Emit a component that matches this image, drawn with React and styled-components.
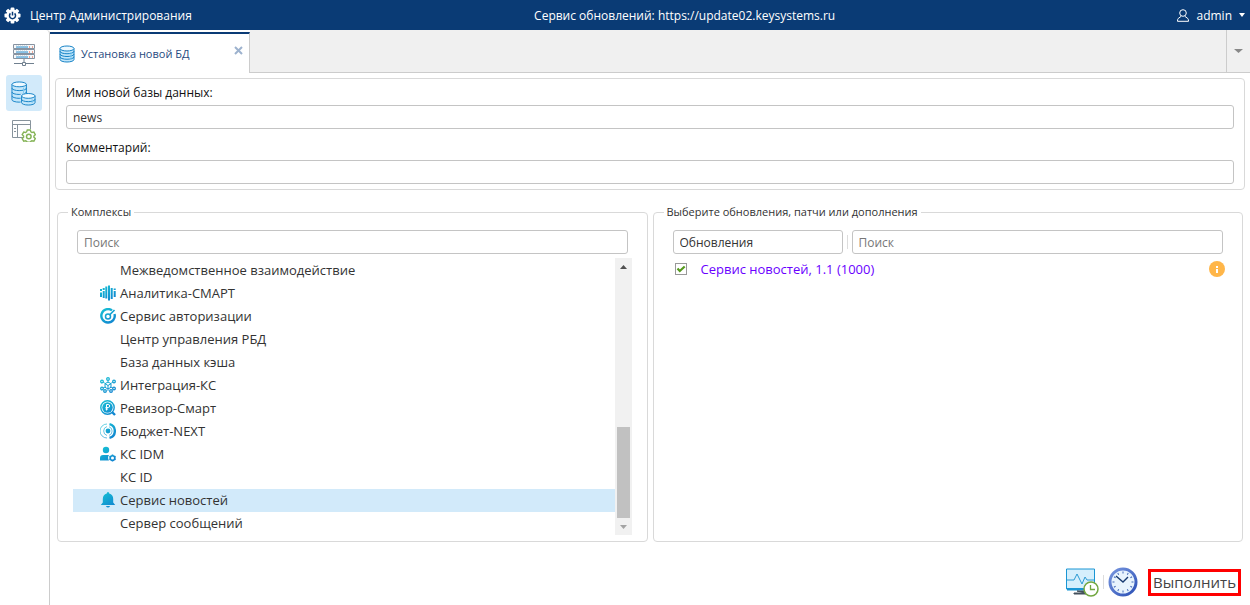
import styled, { createGlobalStyle, css } from 'styled-components'
import { useState } from 'react'

const GlobalStyle = createGlobalStyle`
    * { box-sizing: border-box; }
    body {
        margin: 0;
        background: #fff;
        color: #333;
        font-family: 'Open Sans', 'Noto Sans', sans-serif;
        font-size: 13px;
    }
    button, input, select { font: inherit; color: inherit; }
    svg { display: block; flex: none; }
`

const Page = styled.div`
    display: flex;
    flex-direction: column;
    min-height: 100vh;
`
const Header = styled.header`
    display: flex;
    justify-content: space-between;
    align-items: center;
    height: 30px;
    padding: 0 5px 0 4px;
    background: #0a3b75;
    color: #fff;
    font-size: 12px;
    font-weight: 500;
`
const Brand = styled.div`
    display: flex;
    align-items: center;
    gap: 9px;
`
const UserButton = styled.button`
    display: flex;
    align-items: center;
    gap: 7px;
    padding: 0;
    border: 0;
    background: none;
`
const Body = styled.div`
    display: flex;
    flex: 1;
`
const Sidebar = styled.nav`
    display: flex;
    flex-direction: column;
    align-items: center;
    gap: 2px;
    width: 50px;
    padding: 7px 2px 0 0;
    border-right: 1px solid #ccc;
    border-top-right-radius: 4px;
`
const SideButton = styled.button`
    display: grid;
    place-items: center;
    width: 36px;
    height: 36px;
    padding: 0;
    border: 0;
    border-radius: 3px;
    background: ${({ $active }) => ($active ? '#d2eafa' : 'none')};
`
const Main = styled.main`
    display: flex;
    flex-direction: column;
    flex: 1;
    min-width: 0;
`
const TabBar = styled.div`
    display: flex;
    height: 43px;
`
const Tab = styled.div`
    display: flex;
    align-items: center;
    width: 200px;
    margin-top: 2px;
    padding: 0 6px 0 9px;
    border-top: 2px solid #0a3b75;
    border-right: 1px solid #ccc;
    color: #1f4a80;
    font-size: 11px;
`
const TabTitle = styled.span`
    flex: 1;
    margin-left: 6px;
`
const TabClose = styled.button`
    align-self: flex-start;
    margin-top: 12px;
    padding: 0;
    border: 0;
    background: none;
`
const TabSpace = styled.div`
    flex: 1;
    border-bottom: 1px solid #ccc;
    background: #f0f0f0;
`
const TabMenu = styled.button`
    display: grid;
    place-items: center;
    width: 24px;
    padding: 0;
    border: solid #ccc;
    border-width: 0 0 1px 1px;
    background: #f0f0f0;
`
const Form = styled.div`
    display: flex;
    flex-direction: column;
    gap: 9px;
    margin: 5px 5px 0;
    padding: 4px 10px 5px;
    border: 1px solid #d9d9d9;
    border-radius: 4px;
`
const Field = styled.label`
    display: flex;
    flex-direction: column;
    gap: 2px;
    color: #111;
    font-size: 12px;
    line-height: 20px;
`
const control = css`
    width: 100%;
    height: 24px;
    padding: 0 6px;
    border: 1px solid #c4c4c4;
    border-radius: 3px;
    outline: none;
    background: #fff;
    color: #333;
    font-size: 12px;
`
const Input = styled.input`
    ${control}
    &::placeholder { color: #777; opacity: 1; }
`
const Select = styled.select`
    ${control}
    flex: none;
    width: 170px;
    appearance: none;
`
const Columns = styled.div`
    display: grid;
    grid-template-columns: 1fr 1fr;
    gap: 5px;
    padding: 14px 7px 0;
`
const Group = styled.fieldset`
    min-width: 0;
    margin: 0;
    padding: 10px 15px 6px;
    border: 1px solid #d9d9d9;
    border-radius: 4px;
`
const Legend = styled.legend`
    margin-left: -5px;
    padding: 0 3px;
    font-size: 11px;
    line-height: 16px;
`
const SearchRow = styled.div`
    display: flex;
    align-items: center;
    gap: 4px;
    padding: 0 4px;
`
const Divider = styled.span`
    flex: none;
    width: 1px;
    height: 14px;
    background: #ddd;
`
const ListBox = styled.div`
    display: flex;
    margin-top: 4px;
`
const List = styled.ul`
    flex: 1;
    margin: 0;
    padding: 1px 0 0;
    list-style: none;
`
const Item = styled.li`
    display: flex;
    align-items: center;
    height: 23px;
    padding: 0 0 2px 27px;
    gap: 4px;
    font-size: 13px;
    background: ${({ $selected }) => ($selected ? '#d2eafa' : 'none')};
`
const IconSlot = styled.span`
    width: 16px;
    height: 16px;
`
const Scrollbar = styled.div`
    display: flex;
    flex-direction: column;
    align-items: center;
    justify-content: flex-end;
    width: 17px;
    background: #f1f1f1;
`
const ScrollArrow = styled.span`
    display: grid;
    place-items: center;
    height: 17px;
    margin-bottom: ${({ $up }) => ($up ? 'auto' : '0')};
`
const Thumb = styled.div`
    width: 13px;
    height: 91px;
    background: #c1c1c1;
`
const Update = styled.div`
    display: flex;
    align-items: center;
    height: 23px;
    margin-top: 3px;
    padding: 0 2px 0 6px;
    color: #6a00ff;
    font-size: 13px;
`
const UpdateLabel = styled.label`
    display: flex;
    align-items: center;
    flex: 1;
    gap: 14px;
`
const Check = styled.input`
    width: 12px;
    height: 12px;
    margin: 0;
    appearance: none;
    border: 1px solid #999;
    background: #fff;
    &:checked {
        background: #fff url("data:image/svg+xml,%3Csvg xmlns='http://www.w3.org/2000/svg' viewBox='0 0 10 10'%3E%3Cpath d='M1.5 4.5l2.3 2.5L8.700 2.500' fill='none' stroke='%23569a1e' stroke-width='2.200'/%3E%3C/svg%3E");
    }
`
const Footer = styled.footer`
    display: flex;
    align-items: center;
    justify-content: flex-end;
    gap: 3px;
    margin-top: auto;
    padding: 0 9px 8px 0;
`
const IconButton = styled.button`
    display: grid;
    place-items: center;
    padding: 0 1px;
    border: 0;
    background: none;
`
const RunButton = styled.button`
    height: 27px;
    margin-left: 6px;
    padding: 0 2px;
    border: 3px solid #f00;
    background: #fff;
    color: #444;
    font-size: 15px;
    line-height: 20px;
`

const Gear = () => (
    <svg width="17" height="17" viewBox="-9 -9 18 18">
        {[0, 45, 90, 135].map(a => <rect key={a} x="-2" y="-8.500" width="4" height="17" rx="1" fill="#fff" transform={`rotate(${a})`} />)}
        <circle r="6.500" fill="#fff" />
        <path d="M-2.200-2.200a3.200 3.200 0 1 0 4.400 0M0-4V0" fill="none" stroke="#0a3b75" strokeWidth="1.600" />
    </svg>
)
const Person = () => (
    <svg width="12" height="13" viewBox="0 0 12 13" fill="none" stroke="#fff">
        <circle cx="6" cy="4" r="3.300" />
        <path d="M4.300 7.200L1.200 9.500Q.5 10 .5 12.300h11Q11.500 10 10.800 9.500L7.700 7.200" />
    </svg>
)
const Triangle = ({ color, up, size = 7 }) => (
    <svg width={size} height="4" viewBox="0 0 8 4" preserveAspectRatio="none">
        <path d={up ? 'M0 4h8L4 0z' : 'M0 0h8L4 4z'} fill={color} />
    </svg>
)
const Cross = () => (
    <svg width="9" height="9" viewBox="0 0 9 9">
        <path d="M1 1l7 7M8 1L1 8" stroke="#9db2ce" strokeWidth="2" />
    </svg>
)
const Cylinder = ({ x = 0, y = 0, w = 15, h = 17, rings = 3 }) => {
    const r = w / 2
    const step = (h - 5) / rings
    const curve = i => `M${x} ${y + 2.5 + step * i}a${r} 2.500 0 0 0 ${w} 0`
    return (
        <g fill="none" stroke="#1683c7">
            <path d={`M${x} ${y + 2.5}v${h - 5}a${r} 2.500 0 0 0 ${w} 0v-${h - 5}`} fill="#c2e6fa" />
            <ellipse cx={x + r} cy={y + 2.5} rx={r} ry="2.500" fill="#eef9ff" />
            {Array.from({ length: rings - 1 }, (_, i) => <path key={i} d={curve(i + 1)} />)}
            <path d={`M${x + w - 3} ${y + 6}v${h - 8}`} stroke="#7fcaf0" />
        </g>
    )
}
const TabDatabase = () => <svg width="16" height="18" viewBox="0 0 16 18"><Cylinder x={1} y={1} w={14} h={16} rings={4} /></svg>
const Databases = () => (
    <svg width="25" height="25" viewBox="0 0 26 26">
        <Cylinder x={1} y={1} w={15} h={21} rings={4} />
        <path d="M10 13h15v12H10z" fill="#d2eafa" />
        <Cylinder x={11} y={13} w={14} h={12} rings={2} />
    </svg>
)
const Servers = () => (
    <svg width="22" height="22" viewBox="0 0 22 22" fill="none">
        {[0, 5, 10].map(y => (
            <g key={y}>
                <path d={`M.5 ${y + .5}h21v4h-21z`} fill="#f5f8fa" stroke="#8793a1" />
                <path d={`M3 ${y + 3}h12`} stroke="#1688d0" />
                <path d={`M3 ${y + 2}h12`} stroke="#b8c5cf" strokeDasharray="1 1" />
                <path d={`M16 ${y + 3}h1M19 ${y + 3}h1`} stroke="#e8502f" />
            </g>
        ))}
        <path d="M11 15v3M1 19.500h8M13 19.500h8M9.500 18.500h3v3h-3z" stroke="#70808f" />
    </svg>
)
const Settings = () => (
    <svg width="24" height="22" viewBox="0 0 24 22" fill="none">
        <path d="M12 17.500H.5V.5h18V9M.5 4.500h18M5.500 4.500v13" stroke="#87939c" />
        <path d="M2 8.500h2M2 11.500h2" stroke="#87939c" />
        <path d="M15.300 10h3l.6 1.900 1 .6 2-.4 1.400 2.600-1.400 1.400v1l1.400 1.500-1.400 2.500-2-.4-1 .6-.6 1h-3l-.7-1-1-.6-1.900.4-1.500-2.500 1.400-1.500v-1l-1.400-1.400 1.500-2.600 1.900.4 1-.6z" fill="#fff" stroke="#85b457" strokeWidth="1.400" />
        <circle cx="16.800" cy="16.500" r="2.300" stroke="#85b457" strokeWidth="1.500" />
    </svg>
)
const Info = () => (
    <svg width="16" height="16" viewBox="0 0 16 16">
        <circle cx="8" cy="8" r="8" fill="#ffb649" />
        <path d="M7 5h2v2H7zM7 8h2v4H7z" fill="#fff" />
    </svg>
)
const Monitor = () => (
    <svg width="33" height="30" viewBox="0 0 33 30" fill="none">
        <path d="M.5 2h28v20H.5z" fill="#d5effc" stroke="#1a96d4" />
        <path d="M1 21h28v2.500H1z" fill="#1a96d4" />
        <path d="M11 24h8v2H8v1h13v-1h-2z" stroke="#44515d" fill="#44515d" />
        <path d="M1 13h7l3-6 5 10 3-7 2 3h7" stroke="#2c9bd3" />
        <circle cx="25" cy="22" r="7" fill="#fff" stroke="#72a740" strokeWidth="1.500" />
        <path d="M24.500 18v4.500H29" stroke="#72a740" strokeWidth="1.300" />
    </svg>
)
const Clock = () => (
    <svg width="30" height="30" viewBox="-15 -15 30 30" fill="none">
        <defs>
            <linearGradient id="rim" x2="1" y2="1">
                <stop stopColor="#7796df" />
                <stop offset="1" stopColor="#2c50b5" />
            </linearGradient>
        </defs>
        <circle r="13" fill="#e8f4fd" stroke="url(#rim)" strokeWidth="3" />
        {Array.from({ length: 12 }, (_, i) => <path key={i} d="M0-10.500v2" stroke="#4268b8" transform={`rotate(${i * 30})`} />)}
        <path d="M-7-6L0 0 5-5" stroke="#183b70" strokeWidth="1.400" />
    </svg>
)

const icons = {
    analytics: (
        <path d="M1 4v2M1 7.500v4.500M3.700 3v2M3.700 6v7M6.300 1.500v12M9 .5v15M11.700 3v11M14.700 3.500v1.500M14.700 6v6" strokeWidth="2" />
    ),
    auth: (
        <>
            <path d="M12 2.400A6.700 6.700 0 1 0 14.500 6" strokeWidth="2.400" />
            <circle cx="8" cy="8.500" r="2.500" strokeWidth="1.500" />
            <path d="M9.500 7l5-5" strokeWidth="1.700" />
        </>
    ),
    integration: (
        <>
            <path d="M8 3v3M3 5l3 2M13 5l-3 2M3 11l3-1M13 11l-3-1M8 11v3" strokeWidth=".8" />
            <path d="M8 5l3 1.700v3.600L8 12l-3-1.700V6.700zM5 6.700l3 1.800 3-1.800M8 8.500V12" strokeWidth="1" />
            {[[8, 2], [2, 4.5], [14, 4.5], [2, 11.5], [14, 11.5], [5, 14], [11, 14]].map(([x, y]) => <circle key={`${x}-${y}`} cx={x} cy={y} r="1.300" strokeWidth="1.300" />)}
        </>
    ),
    revisor: (
        <>
            <circle cx="7.500" cy="7.500" r="6.700" strokeWidth="1.400" />
            <circle cx="7.500" cy="7.500" r="5.200" fill="url(#teal)" stroke="none" />
            <path d="M6.500 10.500v-6h1.700a1.500 1.500 0 0 1 0 3H5.500M5.500 9H8" stroke="#fff" />
            <path d="M12 12l3 3" strokeWidth="2.400" />
        </>
    ),
    budget: (
        <>
            <path d="M9.500 1.200a7 7 0 0 1 0 13.600" strokeWidth="2.400" />
            <path d="M7 1A7 7 0 0 0 7 15M7 3.500a4.700 4.700 0 0 0 0 9M9 3.700a4.600 4.600 0 0 1 0 8.700" opacity=".65" />
            <circle cx="8" cy="8" r="2.400" fill="url(#teal)" stroke="none" />
        </>
    ),
    idm: (
        <>
            <circle cx="6" cy="4" r="3.200" fill="url(#teal)" stroke="none" />
            <path d="M0 14.500V12q0-3 3-3h6q-1.800 2.500 0 5.500z" fill="url(#teal)" stroke="none" />
            <circle cx="12.500" cy="12" r="2.300" strokeWidth="1.600" />
            <path d="M12.500 8.500v1.500M12.500 14v1.500M9.400 10.300l1.300.7M14.300 13l1.300.7M9.400 13.700l1.300-.7M14.300 11l1.300-.7" strokeWidth="1.500" />
        </>
    ),
    bell: (
        <path d="M8 0q1.200 0 1.200 1.500 4 1 4 5.500v3.500l2 2.500H.8l2-2.500V7q0-4.500 4-5.500Q6.800 0 8 0zM5.800 14h4.400Q8 17 5.800 14z" fill="url(#teal)" stroke="none" />
    ),
}
const ProductIcon = ({ name }) => (
    <svg width="16" height="16" viewBox="0 0 16 16" fill="none" stroke="url(#teal)">
        <defs>
            <linearGradient id="teal" gradientUnits="userSpaceOnUse" x1="2" y1="0" x2="13" y2="16">
                <stop stopColor="#17c3d4" />
                <stop offset="1" stopColor="#1182d0" />
            </linearGradient>
        </defs>
        {icons[name]}
    </svg>
)

const complexes = [
    { title: 'Межведомственное взаимодействие' },
    { title: 'Аналитика-СМАРТ', icon: 'analytics' },
    { title: 'Сервис авторизации', icon: 'auth' },
    { title: 'Центр управления РБД' },
    { title: 'База данных кэша' },
    { title: 'Интеграция-КС', icon: 'integration' },
    { title: 'Ревизор-Смарт', icon: 'revisor' },
    { title: 'Бюджет-NEXT', icon: 'budget' },
    { title: 'КС IDM', icon: 'idm' },
    { title: 'КС ID' },
    { title: 'Сервис новостей', icon: 'bell' },
    { title: 'Сервер сообщений' },
]

const App = () => {
    const [selected, setSelected] = useState('Сервис новостей')
    return (
        <Page>
            <GlobalStyle />
            <Header>
                <Brand><Gear />Центр Администрирования</Brand>
                <span>Сервис обновлений: https://update02.keysystems.ru</span>
                <UserButton><Person />admin<Triangle color="#fff" size={6} /></UserButton>
            </Header>
            <Body>
                <Sidebar>
                    <SideButton aria-label="Серверы"><Servers /></SideButton>
                    <SideButton aria-label="Базы данных" $active><Databases /></SideButton>
                    <SideButton aria-label="Настройки"><Settings /></SideButton>
                </Sidebar>
                <Main>
                    <TabBar>
                        <Tab>
                            <TabDatabase />
                            <TabTitle>Установка новой БД</TabTitle>
                            <TabClose aria-label="Закрыть"><Cross /></TabClose>
                        </Tab>
                        <TabSpace />
                        <TabMenu aria-label="Вкладки"><Triangle color="#888" size={9} /></TabMenu>
                    </TabBar>
                    <Form>
                        <Field>Имя новой базы данных:<Input defaultValue="news" /></Field>
                        <Field>Комментарий:<Input /></Field>
                    </Form>
                    <Columns>
                        <Group>
                            <Legend>Комплексы</Legend>
                            <SearchRow><Input placeholder="Поиск" aria-label="Поиск комплекса" /></SearchRow>
                            <ListBox>
                                <List>
                                    {complexes.map(({ title, icon }) => (
                                        <Item key={title} $selected={title === selected} onClick={() => setSelected(title)}>
                                            <IconSlot>{icon && <ProductIcon name={icon} />}</IconSlot>
                                            {title}
                                        </Item>
                                    ))}
                                </List>
                                <Scrollbar>
                                    <ScrollArrow $up><Triangle up color="#505050" /></ScrollArrow>
                                    <Thumb />
                                    <ScrollArrow><Triangle color="#a3a3a3" /></ScrollArrow>
                                </Scrollbar>
                            </ListBox>
                        </Group>
                        <Group>
                            <Legend>Выберите обновления, патчи или дополнения</Legend>
                            <SearchRow>
                                <Select aria-label="Тип"><option>Обновления</option></Select>
                                <Divider />
                                <Input placeholder="Поиск" aria-label="Поиск обновления" />
                            </SearchRow>
                            <Update>
                                <UpdateLabel><Check type="checkbox" defaultChecked />Сервис новостей, 1.1 (1000)</UpdateLabel>
                                <Info />
                            </Update>
                        </Group>
                    </Columns>
                    <Footer>
                        <IconButton aria-label="Мониторинг"><Monitor /></IconButton>
                        <Divider />
                        <IconButton aria-label="Расписание"><Clock /></IconButton>
                        <RunButton>Выполнить</RunButton>
                    </Footer>
                </Main>
            </Body>
        </Page>
    )
}

export default App
